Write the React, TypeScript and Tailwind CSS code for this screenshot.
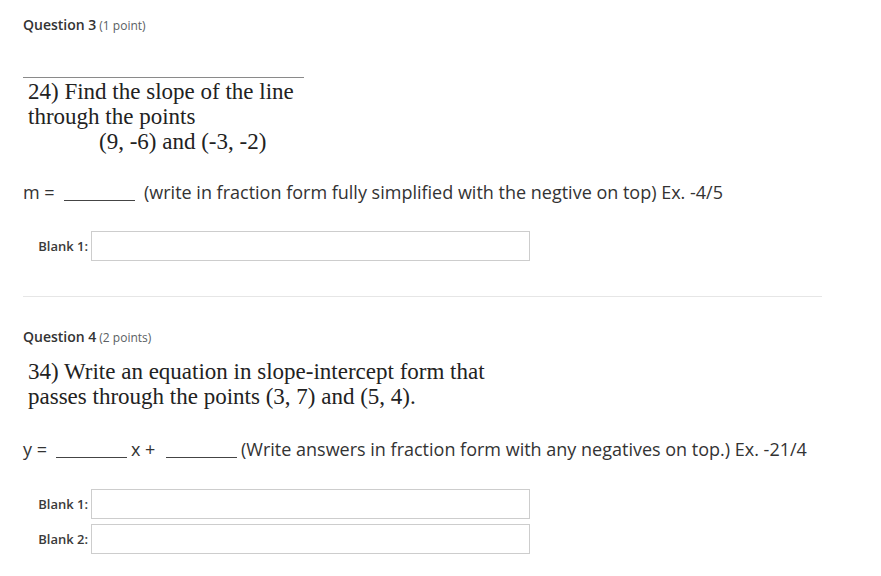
import React from "react";

const sans = { fontFamily: '"Open Sans", "Liberation Sans", sans-serif' };
const serif = { fontFamily: '"Liberation Serif", serif' };

function Blank({ label }: { label: string }) {
  return (
    <div className="flex items-center h-[30px]">
      <div className="w-[68px] pr-[3px] text-right text-[13px] leading-[20px] font-semibold text-[#3a3a3a]">{label}</div>
      <div className="w-[439px] h-[30px] border border-[#cdcdcd] bg-white" />
    </div>
  );
}

function Rule({ w }: { w: string }) {
  return <span className={`block ${w} h-[1px] bg-[#444] self-end mb-[4px] shrink-0`} />;
}

export default function App() {
  return (
    <div className="w-[881px] h-[576px] bg-white text-[#333] overflow-hidden" style={sans}>
      <div className="pl-[23px] w-[822px]">
        <div className="pt-[15px] flex items-baseline leading-[20px]">
          <span className="text-[14px] font-semibold text-[#333]">Question 3</span>
          <span className="ml-[3px] text-[12px] text-[#5a5f63]">(1 point)</span>
        </div>
        <div className="mt-[41px] w-[281px] h-[1px] bg-[#8a8a8a]" />
        <div className="pl-[5px] pt-[1px] text-[23px] leading-[25px] text-[#222]" style={serif}>
          <div>24) Find the slope of the line</div>
          <div>through the points</div>
          <div className="pl-[71px]">(9, -6) and (-3, -2)</div>
        </div>
        <div className="mt-[25px] flex text-[18px] leading-[26px] h-[26px]">
          <span className="w-[41px] shrink-0">m =</span>
          <Rule w="w-[71px]" />
          <span className="ml-[9px] whitespace-nowrap">(write in fraction form fully simplified with the negtive on top) Ex. -4/5</span>
        </div>
        <div className="mt-[26px]">
          <Blank label="Blank 1:" />
        </div>
        <div className="mt-[35px] h-[1px] bg-[#e6e6e6]" />
        <div className="mt-[30px] flex items-baseline leading-[20px]">
          <span className="text-[14px] font-semibold text-[#333]">Question 4</span>
          <span className="ml-[3px] text-[12px] text-[#5a5f63]">(2 points)</span>
        </div>
        <div className="pl-[5px] mt-[11px] text-[23px] leading-[25px] text-[#222]" style={serif}>
          <div>34) Write an equation in slope-intercept form that</div>
          <div>passes through the points (3, 7) and (5, 4).</div>
        </div>
        <div className="mt-[27px] flex text-[18px] leading-[26px] h-[26px]">
          <span className="w-[33px] shrink-0">y =</span>
          <Rule w="w-[71px]" />
          <span className="w-[39px] pl-[4px] shrink-0">x +</span>
          <Rule w="w-[71px]" />
          <span className="ml-[4px] whitespace-nowrap">(Write answers in fraction form with any negatives on top.) Ex. -21/4</span>
        </div>
        <div className="mt-[27px] flex flex-col gap-[5px]">
          <Blank label="Blank 1:" />
          <Blank label="Blank 2:" />
        </div>
      </div>
    </div>
  );
}
